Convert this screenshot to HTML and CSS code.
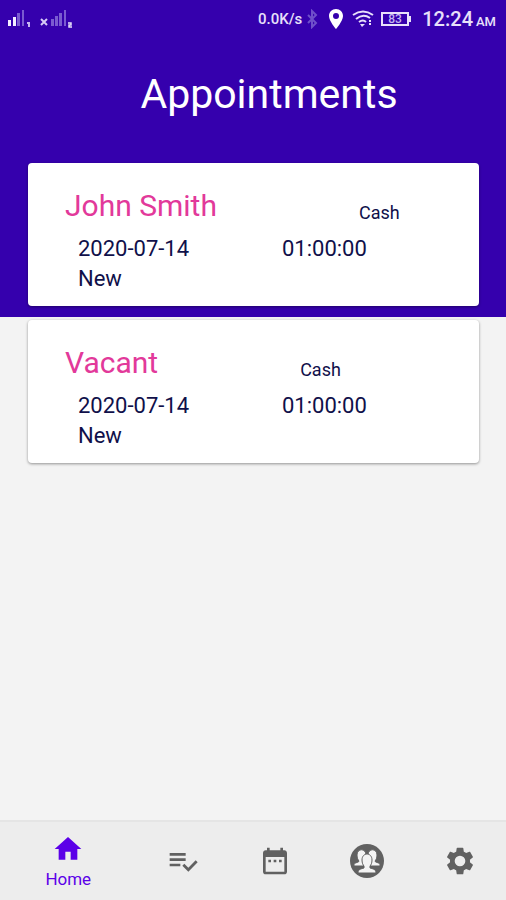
FILE: index.html
```html
<!DOCTYPE html>
<html lang="en">
<head>
<meta charset="utf-8">
<meta name="viewport" content="width=device-width, initial-scale=1">
<title>Appointments</title>
<link rel="stylesheet" href="styles.css">
</head>
<body>
<div class="app">
  <div class="status">
    <svg class="signals" viewBox="0 0 70 22" aria-hidden="true">
      <g fill="#f4efff"><path d="M0 12h3v6H0zM5 9h3v9H5z"/></g>
      <g fill="#7a5bd0"><path d="M9 5h3v13H9zM14 2h2v16h-2zM43 11h3v7h-3zM47 8h3v10h-3zM51 5h3v13h-3zM56 2h2v16h-2z"/></g>
      <path d="M33 11l6 6M39 11l-6 6" stroke="#d6caf5" stroke-width="2"/>
      <path d="M19 15h2v4" fill="none" stroke="#c5b5f0" stroke-width="2"/>
      <path d="M60 15h3v2h-2v2h3" fill="none" stroke="#e8e0fa" stroke-width="1.500"/>
    </svg>
    <div class="status-right">
      <span class="speed">0.0K/s</span>
      <svg class="bluetooth" viewBox="0 0 12 20" aria-hidden="true"><path d="M2 6l8 8-4 4V2l4 4-8 8" fill="none" stroke="#6f4fca" stroke-width="2"/></svg>
      <svg class="pin" viewBox="0 0 16 22" aria-hidden="true"><path d="M8 1C4 1 1 4 1 8c0 5 7 13 7 13s7-8 7-13c0-4-3-7-7-7zm0 10a3 3 0 1 1 0-6 3 3 0 0 1 0 6z" fill="#fff"/></svg>
      <svg class="wifi" viewBox="0 0 22 20" aria-hidden="true"><g fill="none" stroke="#e8e0fa" stroke-width="2"><path d="M1 6Q11-1 21 6M4 10Q11 4 18 9M7 13q4-3 7 0"/><path d="M18 11v6" stroke-dasharray="2 1"/></g><path d="M8 15h5l-3 3z" fill="#e8e0fa"/></svg>
      <svg class="battery" viewBox="0 0 31 16" aria-hidden="true"><path d="M1 2h26v12H1zM29 5v6" fill="none" stroke="#e8e0fa" stroke-width="2"/><text x="14" y="12" text-anchor="middle">83</text></svg>
      <span class="clock">12:24<small>AM</small></span>
    </div>
  </div>
  <header class="header"><h1>Appointments</h1></header>
  <main class="list">
    <article class="card">
      <div class="card-top"><h2>John Smith</h2><span class="payment">Cash</span></div>
      <div class="details"><span>2020-07-14</span><span>01:00:00</span><span>New</span></div>
    </article>
    <article class="card">
      <div class="card-top"><h2>Vacant</h2><span class="payment">Cash</span></div>
      <div class="details"><span>2020-07-14</span><span>01:00:00</span><span>New</span></div>
    </article>
  </main>
  <nav class="tabs" aria-label="Main">
    <a class="tab active" href="#home">
      <svg viewBox="0 0 24 24" aria-hidden="true"><path d="M10 20v-6h4v6h5v-8h3L12 3 2 12h3v8z"/></svg>
      <span>Home</span>
    </a>
    <a class="tab" href="#tasks" aria-label="Tasks">
      <svg viewBox="0 0 24 24" aria-hidden="true"><path d="M14 10H2v2h12v-2zm0-4H2v2h12V6zM2 16h8v-2H2v2zm19.5-4.500L23 13l-6.990 7-4.510-4.500L13 14l3.010 3 5.490-5.500z"/></svg>
    </a>
    <a class="tab" href="#calendar" aria-label="Calendar">
      <svg viewBox="0 0 24 24" aria-hidden="true"><path d="M9 11H7v2h2v-2zm4 0h-2v2h2v-2zm4 0h-2v2h2v-2zm2-7h-1V2h-2v2H8V2H6v2H5c-1.100 0-2 .9-2 2v14c0 1.100.9 2 2 2h14c1.100 0 2-.9 2-2V6c0-1.100-.9-2-2-2zm0 16H5V9h14v11z"/></svg>
    </a>
    <a class="tab people" href="#clients" aria-label="Clients">
      <svg viewBox="0 0 36 36" aria-hidden="true"><circle cx="18" cy="18" r="17"/><g class="figure"><path d="M8 12c0-7 9-7 9 0 0 3-1 5-2 6v5H5c-1-4 5-3 5-5-1-1-2-3-2-6z"/><path d="M28 12c0-7-9-7-9 0 0 3 1 5 2 6v5h10c1-4-5-3-5-5 1-1 2-3 2-6z"/><path d="M13 17c0-8 10-8 10 0 0 3-1 5-2 6v2c3 1 6 1 6 5H9c0-4 3-4 6-5v-2c-1-1-2-3-2-6z"/></g></svg>
    </a>
    <a class="tab" href="#settings" aria-label="Settings">
      <svg viewBox="0 0 24 24" aria-hidden="true"><path d="M19.430 12.980c.04-.32.070-.64.070-.98s-.03-.66-.07-.98l2.110-1.650c.19-.15.240-.42.120-.64l-2-3.460c-.12-.22-.39-.3-.61-.22l-2.490 1c-.52-.4-1.080-.73-1.690-.98l-.38-2.650C14.460 2.180 14.250 2 14 2h-4c-.25 0-.46.180-.49.420l-.38 2.650c-.61.250-1.170.590-1.690.980l-2.490-1c-.23-.09-.49 0-.61.220l-2 3.460c-.13.220-.07.490.12.640l2.110 1.650c-.04.320-.07.650-.07.980s.03.660.070.980l-2.110 1.650c-.19.150-.24.420-.12.640l2 3.460c.12.220.39.300.61.220l2.490-1c.52.400 1.080.730 1.690.980l.38 2.650c.03.240.24.420.49.420h4c.25 0 .46-.18.490-.42l.38-2.650c.61-.25 1.170-.59 1.690-.98l2.490 1c.23.090.49 0 .61-.22l2-3.460c.12-.22.070-.49-.12-.64zM12 16a4 4 0 1 1 0-8 4 4 0 0 1 0 8z"/></svg>
    </a>
  </nav>
</div>
</body>
</html>
```
FILE: styles.css
```css
* { box-sizing: border-box; }
body { margin: 0; background: #f3f3f3; color: #10104a; font-family: Roboto, sans-serif; }
h1, h2 { margin: 0; font-weight: 400; }
svg { display: block; flex: none; }
.app {
  display: flex;
  flex-direction: column;
  min-height: 100vh;
  background: linear-gradient(#3500ad 317px, #f3f3f3 317px);
}
.status {
  display: flex;
  justify-content: space-between;
  align-items: center;
  height: 38px;
  padding: 0 10px 0 8px;
  color: #e8e0fa;
}
.signals { width: 70px; height: 22px; }
.status-right { display: flex; align-items: center; }
.speed { font-size: 15px; font-weight: 500; }
.bluetooth { width: 12px; height: 20px; margin-left: 4px; }
.pin { width: 16px; height: 22px; margin-left: 10px; }
.wifi { width: 22px; height: 20px; margin-left: 8px; }
.battery { width: 31px; height: 16px; margin-left: 7px; }
.battery text { fill: #c5b5f0; font-size: 12px; font-weight: 500; }
.clock { display: flex; align-items: baseline; gap: 3px; margin-left: 10px; font-size: 20px; font-weight: 500; }
.clock small { font-size: 13px; }
.header { padding: 32px 0 44px 32px; text-align: center; color: #fff; }
.header h1 { font-size: 41px; line-height: 48px; }
.list { flex: 1; display: flex; flex-direction: column; gap: 14px; padding: 1px 27px 24px 28px; }
.card {
  padding: 24px 37px 12px;
  background: #fff;
  border-radius: 4px;
  box-shadow: 0 1px 3px rgba(0, 0, 0, 0.4);
}
.card-top { display: flex; align-items: flex-end; gap: 142px; }
.card h2 { color: #e2399a; font-size: 30px; line-height: 38px; }
.payment { font-size: 18px; line-height: 24px; }
.details {
  display: grid;
  grid-template-columns: 1fr 1fr;
  column-gap: 44px;
  padding: 9px 0 0 13px;
  font-size: 22px;
  line-height: 30px;
}
.tabs {
  display: flex;
  height: 80px;
  background: #ededed;
  border-top: 2px solid #e5e5e5;
}
.tab {
  flex: 92 1 0;
  display: flex;
  flex-direction: column;
  align-items: center;
  justify-content: center;
  color: #616161;
  fill: #616161;
  text-decoration: none;
  font-size: 17px;
  line-height: 28px;
}
.tab svg { width: 32px; height: 32px; }
.tab.people svg { width: 36px; height: 36px; }
.figure path { fill: #f4f4f4; stroke: #616161; }
.active { flex-grow: 136; padding-top: 4px; color: #5b00e8; fill: #5b00e8; }
```
